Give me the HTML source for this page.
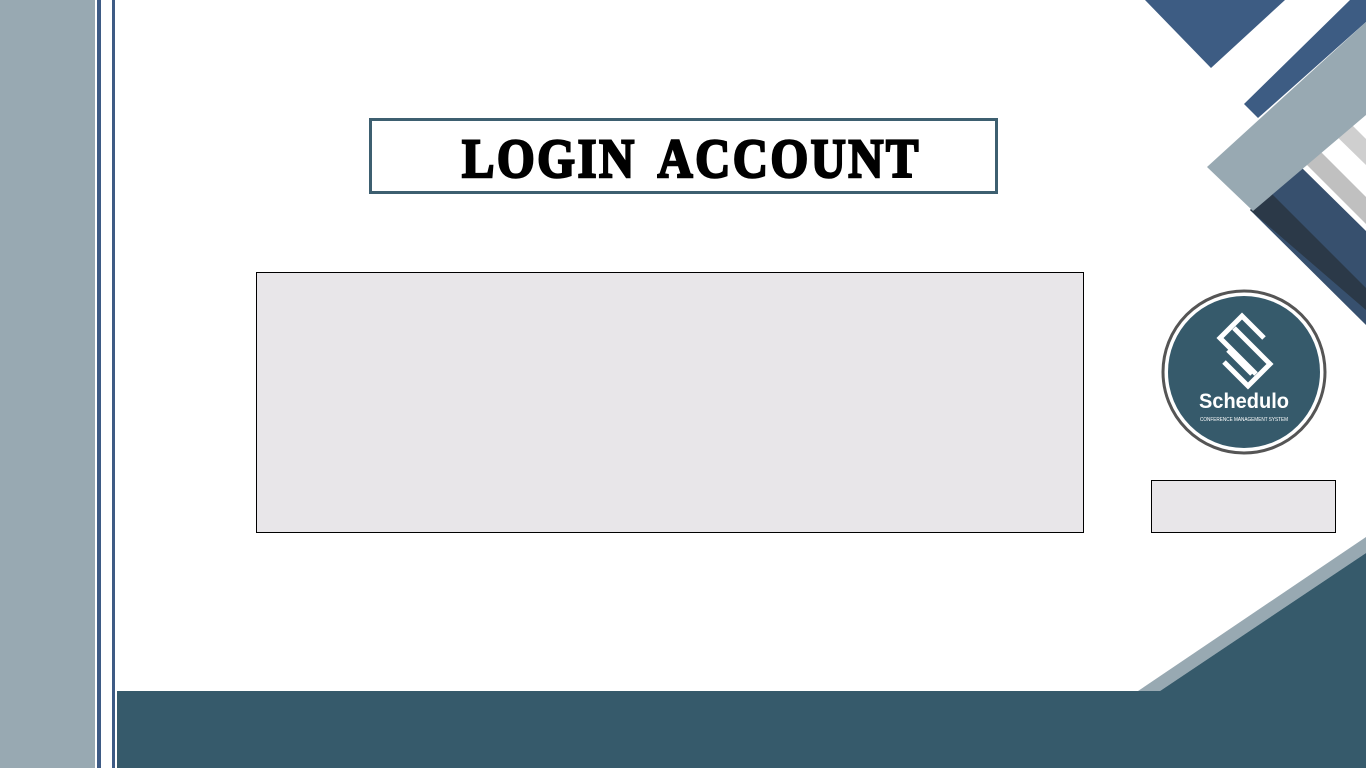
<!DOCTYPE html>
<html><head><meta charset="utf-8"><style>
html,body{margin:0;padding:0}
body{width:1366px;height:768px;position:relative;overflow:hidden;background:#fff;font-family:"Liberation Sans",sans-serif}
.a{position:absolute}
</style></head><body>
<div class="a" style="left:0;top:0;width:95px;height:768px;background:#98a9b2"></div>
<div class="a" style="left:97px;top:0;width:4px;height:768px;background:#3e5b85"></div>
<div class="a" style="left:112px;top:0;width:3px;height:768px;background:#3e5b85"></div>
<div class="a" style="left:117px;top:691px;width:1050px;height:77px;background:#365a6b"></div>
<svg class="a" style="left:0;top:0" width="1366" height="768">
<polygon points="1145,0 1285,0 1211,68" fill="#3d5c83"/>
<polygon points="1244,104 1350,0 1366,0 1366,22 1258,118" fill="#3d5c83"/>
<polygon points="1296,154 1310,141 1366,197 1366,224" fill="#c0c0c0"/>
<polygon points="1326,126 1340,113 1366,139 1366,165" fill="#cfcfcf"/>
<polygon points="1250,210 1300,166 1366,231 1366,325" fill="#37506e"/>
<polygon points="1250,210 1270,192 1366,288 1366,310" fill="#2b3948"/>
<polygon points="1207,167 1366,22 1366,115 1253,211" fill="#98a9b2"/>
<polygon points="1138,691 1366,537 1366,553 1160,691" fill="#98a9b2"/>
<polygon points="1160,691 1366,553 1366,768 1160,768" fill="#365a6b"/>
<circle cx="1244" cy="372" r="81" fill="#fff" stroke="#555" stroke-width="3"/>
<circle cx="1244" cy="372" r="76" fill="#365a6b"/>
<g fill="none" stroke="#fff" stroke-width="5" stroke-linejoin="miter">
<polyline points="1264,338 1242,316 1220,338 1256,374"/>
<polyline points="1228,350 1252,374"/>
<polyline points="1224,362 1248,386 1270,364 1234,328"/>
</g>
<text x="1244" y="408" text-anchor="middle" font-family="Liberation Sans Narrow, Liberation Sans" font-weight="bold" font-size="21" fill="#fff" textLength="90" lengthAdjust="spacingAndGlyphs">Schedulo</text>
<text x="1244" y="421" text-anchor="middle" font-family="Liberation Sans" font-size="5.5" fill="#fff" textLength="88" lengthAdjust="spacingAndGlyphs">CONFERENCE MANAGEMENT SYSTEM</text>
<text x="462" y="177" textLength="459" lengthAdjust="spacingAndGlyphs" font-family="Liberation Serif" font-weight="bold" font-size="55" fill="#000" stroke="#000" stroke-width="2.5" letter-spacing="3" word-spacing="10">LOGIN ACCOUNT</text>
</svg>
<div class="a" style="left:369px;top:118px;width:623px;height:70px;border:3px solid #3d5f70"></div>
<div class="a" style="left:256px;top:272px;width:826px;height:259px;background:#e8e6e9;border:1.5px solid #000"></div>
<div class="a" style="left:1151px;top:480px;width:183px;height:51px;background:#e8e6e9;border:1.5px solid #000"></div>
</body></html>
